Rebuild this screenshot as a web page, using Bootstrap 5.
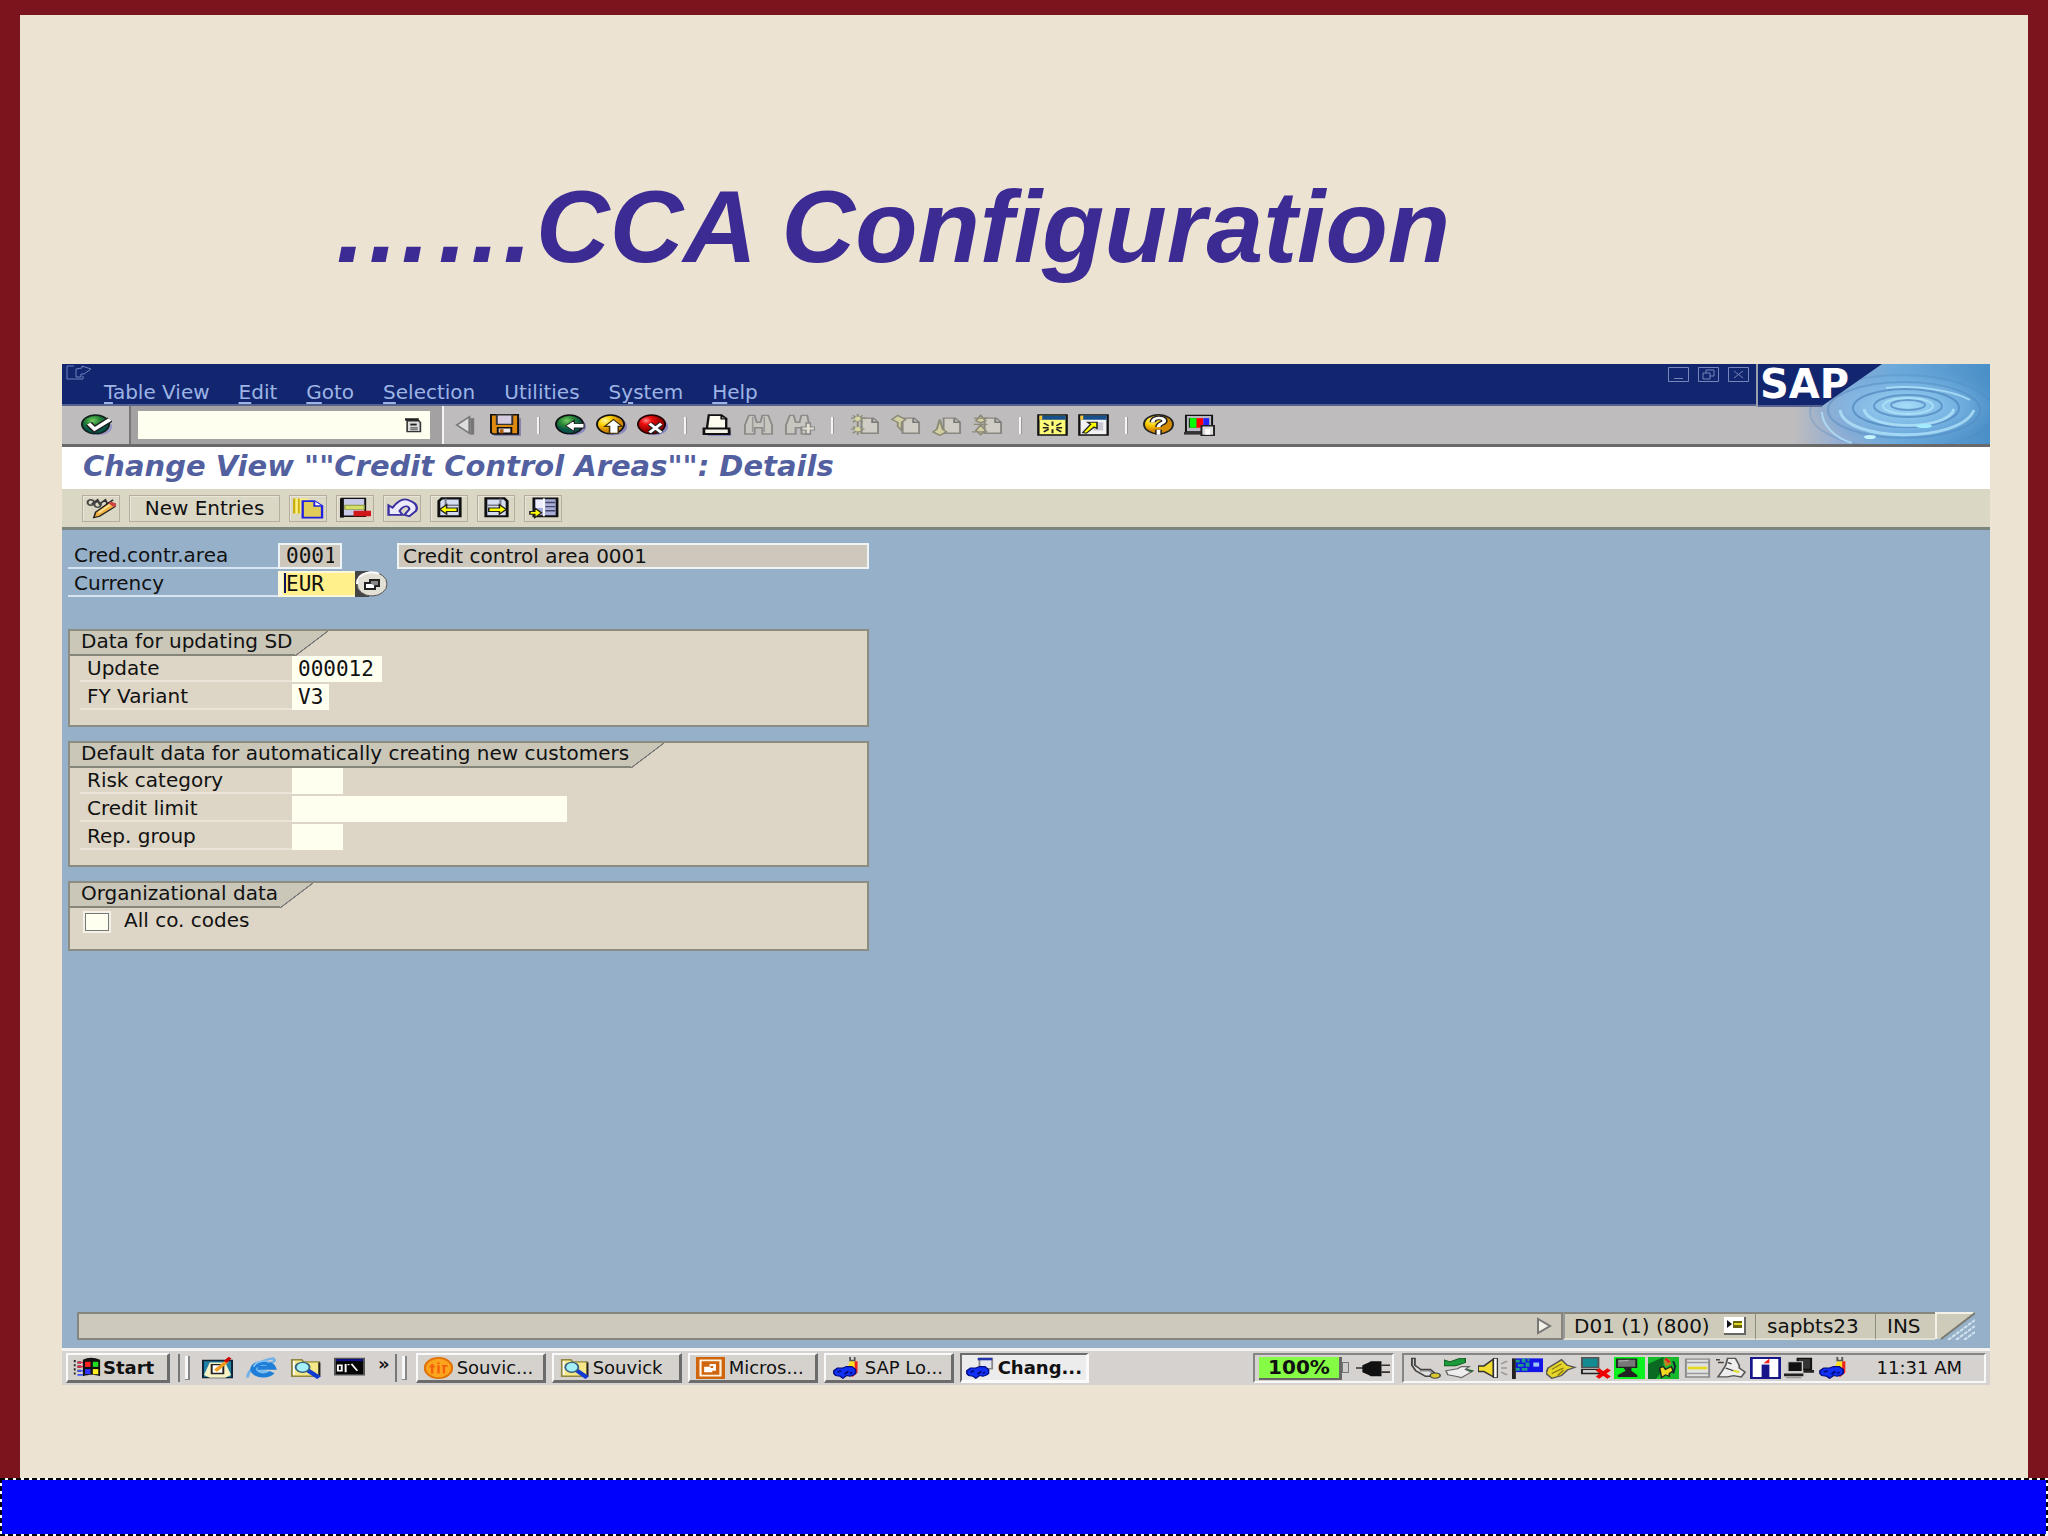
<!DOCTYPE html>
<html lang="en">
<head>
<meta charset="utf-8">
<meta name="viewport" content="width=device-width, initial-scale=1">
<title>CCA Configuration</title>
<link href="https://cdn.jsdelivr.net/npm/bootstrap@5.3.0/dist/css/bootstrap.min.css" rel="stylesheet">
<style>
body{font-family:"DejaVu Sans",sans-serif;font-size:20px;line-height:24px;color:#111;background:#ede3d3}
.slide{min-height:100vh}
.slide-body{border:solid #7b141c;border-width:15px 20px 0}
.slide-head{height:349px;padding:152px 0 0 312px}
.slide-head h1{font:italic bold 102px/120px "Liberation Sans",Arial,sans-serif;color:#3b2b92;white-space:nowrap}
.sap-win{margin:0 38px 93px 42px}
.ico{width:31px;height:22px;display:block;flex:none}
button{font:inherit;color:inherit;padding:0;border:0;background:none}
.menu-row{height:42px;background:#122670;border-bottom:2px solid #56628f}
.menu-row nav{padding-left:12px;gap:29px}
.menu-row a{color:#9db4e4;text-decoration:none}
.menu-row u{text-underline-offset:3px}
.win-mark{width:30px;height:20px;margin-top:-1px}
.win-btns{gap:9px;padding:3px 7px 0 0}
.win-btns svg{width:21px;height:15px;display:block}
.tool-row{height:41px;background:#bebcbd;border-bottom:3px solid #696969}
.ok-cell{width:67px;padding-left:19px}
.cmd-cell{width:315px;background:#a3a1a2;border-left:2px solid #777;border-right:2px solid #f5f5f5;padding:5px 12px 5px 7px}
.cmd-box{background:#fffff0;height:28px}
.cmd-box input{border:0;background:none;min-width:0;outline:0}
.tb{width:41px;display:flex;justify-content:center}
.tsep{width:24px;display:flex;justify-content:center}
.tsep::before{content:"";width:3px;height:17px;background:#f4f4f4;border-right:1px solid #999}
.sap-art{width:234px;height:83px;flex:none;display:block}
.view-title{height:42px;background:#fff;padding-left:21px;font:italic bold 29px/38px "DejaVu Sans",sans-serif;color:#5360a0;margin:0;white-space:nowrap}
.app-row{height:41px;background:#dbd7c5;border-bottom:3px solid #7b8580;padding:0 20px;gap:9px}
.app-row button{height:27px;min-width:38px;border:1px solid #b5ad9e;box-shadow:inset 1px 1px #eae5d8;display:flex;align-items:center;justify-content:center}
.app-row .wide-btn{width:151px}
.work{background:#95b0c8;padding:13px 6px 8px}
.frow{height:28px;display:flex;align-items:flex-start}
.frow label{height:26px;width:210px;padding-left:6px;border-bottom:2px solid #d8e6f2;white-space:nowrap}
.frow input[type=text]{height:26px;border:0;border-radius:0;background:#fffff0;padding:0 6px;font:21px/24px "DejaVu Sans Mono",monospace;color:#111;outline:0}
.frow input.ro{background:#cdc8bb;border:2px solid #eef3f6}
.frow input.txt{font:20px/22px "DejaVu Sans",sans-serif;padding:0 4px;width:472px;margin-left:55px}
.frow input.w4{width:64px}
.frow input.cur{width:77px;background:#fff08c;border:solid #fff8d8;border-width:2px 0 2px 5px;padding-left:3px}
.w-upd{width:90px}.w-fy{width:37px}.w-sm{width:51px}.w-lim{width:275px}
.caret-cell{position:relative}
.caret-cell::before{content:"";position:absolute;left:6px;top:2px;width:2px;height:20px;background:#101060}
.f4{width:33px;height:26px}
.grps{max-width:801px;margin-top:30px;display:flex;flex-direction:column;gap:14px}
.grp{border:2px solid #8c8c80;background:#ddd6c6;padding-bottom:13px;margin:0}
.grp legend{float:left;width:auto;margin:0;display:flex;height:25px;font-size:20px;line-height:20px}
.grp legend span{background:#cac7b9;border-bottom:2px solid #85857a;padding:0 2px 0 11px;white-space:nowrap}
.grp legend::after{content:"";width:33px;background:linear-gradient(to bottom right,#cac7b9 48%,#777 49%,#777 51%,transparent 52%)}
.grp-in{clear:both;padding-left:10px}
.grp .frow label{width:212px;padding-left:7px;border-color:#ece3d8}
.frow input[type=checkbox]{appearance:none;width:26px;height:20px;margin:4px 0 0 4px;background:#fffff0;border:2px solid #777;outline:2px solid #f4f1e6;outline-offset:-1px}
.grp .frow label.chk{border:0;padding-left:14px}
.status{height:28px;margin:0 9px;line-height:24px}
.st-msg{background:#cec9bd;border:2px solid #86867e}
.st-cell{background:#cfcbbb;border-top:2px solid #86867e;border-bottom:2px solid #dfe0d0;white-space:nowrap}
.st-cell + .st-cell{border-left:1px solid #8d8d80}
.st-a{width:192px;padding-left:9px;gap:14px;border-left:2px solid #999}
.st-b{width:120px;padding-left:11px}.st-c{width:60px;padding-left:11px}
.st-end{width:40px;height:28px;display:block}
.taskbar{height:37px;background:#d6d2cf;border-top:3px solid #f3f3f3;padding:2px 4px;font-size:18px;line-height:24px}
.task{height:30px;width:130px;display:flex;align-items:center;gap:4px;padding:0 6px;background:#d5d1cd;border:solid;border-width:2px 3px 3px 2px;border-color:#fafafa #6c6c6c #6c6c6c #fafafa;white-space:nowrap;overflow:hidden}
.task .ico{width:29px}
.start{width:104px;padding:0 3px 0 4px;font-weight:bold;gap:2px}
.task.active{background:#ececec;border-color:#6c6c6c #fafafa #fafafa #6c6c6c;font-weight:bold;width:129px;padding:0 3px}
.grip{width:14px;height:28px;border-left:2px solid #777;position:relative;margin:0 3px 0 8px}
.grip::before{content:"";position:absolute;left:5px;top:2px;width:5px;height:24px;background:#f8f8f8;border-right:2px solid #888;border-bottom:1px solid #888}
.quick{gap:13px;padding:0 5px 0 7px}
.tasks{gap:6px;margin-left:4px}
.inset-box{height:30px;border:2px solid;border-color:#858585 #f8f8f8 #f8f8f8 #858585}
.batt{width:141px;padding-left:4px;gap:14px}
.batt b{width:83px;height:23px;background:#86fb45;border:solid #666;border-width:0 3px 2px 0;font-size:20px;line-height:21px;text-align:center;position:relative}
.batt b::after{content:"";position:absolute;left:83px;top:5px;width:7px;height:11px;background:#ccc;border:1px solid #777}
.tray{padding:0 22px 0 6px;gap:3px;width:584px}
.foot{height:58px;background:#0000fd;
 background-image:repeating-linear-gradient(90deg,#000 0 5px,#fff 5px 8px),repeating-linear-gradient(90deg,#001 0 5px,#fff 5px 8px),repeating-linear-gradient(#001 0 5px,#fff 5px 8px),repeating-linear-gradient(#001 0 5px,#fff 5px 8px);
 background-size:100% 2px,100% 2px,2px 100%,2px 100%;background-position:0 0,0 100%,0 0,100% 0;background-repeat:no-repeat}
</style>
<script src="https://cdn.jsdelivr.net/npm/bootstrap@5.3.0/dist/js/bootstrap.bundle.min.js"></script>
</head>
<body>
<svg width="0" height="0" class="position-absolute" aria-hidden="true"><defs>
<radialGradient id="gGreen" cx=".4" cy=".3"><stop offset="0" stop-color="#7c6"/><stop offset=".5" stop-color="#2b8a36"/><stop offset="1" stop-color="#075548"/></radialGradient>
<radialGradient id="gYel" cx=".3" cy=".3"><stop offset="0" stop-color="#fff7a0"/><stop offset=".5" stop-color="#fcd000"/><stop offset="1" stop-color="#d48a00"/></radialGradient>
<radialGradient id="gRed" cx=".3" cy=".3"><stop offset="0" stop-color="#ff8a8a"/><stop offset=".4" stop-color="#f01010"/><stop offset="1" stop-color="#a00000"/></radialGradient>
<symbol id="ok" viewBox="0 0 16 16" preserveAspectRatio="none"><ellipse cx="9" cy="9" rx="7" ry="6.5" fill="#9996c4"/><ellipse cx="7.5" cy="7.5" rx="7" ry="6.8" fill="url(#gGreen)" stroke="#12201a"/><path d="M4 7l3 4 8-7" fill="none" stroke="#222" stroke-width="4"/><path d="M4 7l3 4 8-7" fill="none" stroke="#fff" stroke-width="2.2"/></symbol>
<symbol id="drop" viewBox="0 0 16 16" preserveAspectRatio="none"><path d="M2 3h11l1.500 2v9.500H2z" fill="#ddd" stroke="#333" stroke-width="1.500"/><path d="M0 1.500h13" stroke="#222" stroke-width="2.500"/><path d="M5 6h6v2H5z" fill="#222"/><path d="M5 10.500h7M5 12.500h7" stroke="#555" stroke-width="1.200"/></symbol>
<symbol id="tri" viewBox="0 0 16 16" preserveAspectRatio="none"><path d="M11 3v12L13 15V3z" fill="#777"/><path d="M10.500 2v12L4 8z" fill="#ddd" stroke="#777"/></symbol>
<symbol id="save" viewBox="0 0 16 16" preserveAspectRatio="none"><path d="M3 3h13v13H2z" fill="#8885a8"/><path d="M.5.5h14v14h-13l-1-1z" fill="#e08a10" stroke="#111"/><path d="M3.500.5h8v7h-8z" fill="#d6cbe0" stroke="#333"/><path d="M4 10h7v4H4z" fill="#f2e8ee" stroke="#111"/><path d="M5 11h2v3H5z" fill="#b06010"/></symbol>
<symbol id="back" viewBox="0 0 16 16" preserveAspectRatio="none"><ellipse cx="9" cy="9" rx="7" ry="6.500" fill="#8a88c0"/><ellipse cx="7.500" cy="7.500" rx="7" ry="6.800" fill="url(#gGreen)" stroke="#111"/><path d="M5.500 8.500L10 4.500v2.500h5v3.200h-5v2.500z" fill="#fff" stroke="#222" stroke-width=".6"/></symbol>
<symbol id="exit" viewBox="0 0 16 16" preserveAspectRatio="none"><ellipse cx="9" cy="9" rx="7" ry="6.500" fill="#8a88c0"/><ellipse cx="7.500" cy="7.500" rx="7" ry="6.800" fill="url(#gYel)" stroke="#111"/><path d="M9 4l4.500 5h-2v5h-4.500V9h-2.500z" fill="#fff" stroke="#443300" stroke-width=".8"/></symbol>
<symbol id="cancel" viewBox="0 0 16 16" preserveAspectRatio="none"><ellipse cx="9" cy="9" rx="7" ry="6.500" fill="#8a88c0"/><ellipse cx="7.500" cy="7.500" rx="7" ry="6.800" fill="url(#gRed)" stroke="#200"/><path d="M6.500 7l6 6.500M12.500 7l-6 6.500" stroke="#222" stroke-width="3.200"/><path d="M6.500 7l6 6.500M12.500 7l-6 6.500" stroke="#fff" stroke-width="1.700"/></symbol>
<symbol id="print" viewBox="0 0 16 16" preserveAspectRatio="none"><path d="M3 12h12v4H3z" fill="#8a88c0"/><path d="M3.500.8h6.500l2.500 2.500v7.500h-10z" fill="#fffdf0" stroke="#111" stroke-width="1.200"/><path d="M10 1v2.500h3" fill="none" stroke="#111"/><path d="M1 10.500h13v4H1z" fill="#f4f4e8" stroke="#111" stroke-width="1.400"/></symbol>
<symbol id="find" viewBox="0 0 16 16" preserveAspectRatio="none"><path d="M3 1h3l1 5h2l1-5h3l2 7v6.500h-5V10H6v4.500H1V8z" fill="#c9c6c0" stroke="#8d8b88"/><path d="M5 2v11M11 2v11" stroke="#999" stroke-width=".8"/></symbol>
<symbol id="findn" viewBox="0 0 16 16" preserveAspectRatio="none"><path d="M3 1h2l1 5h2l1-5h3l1 7v6.500H9V10H6v4.500H1V8z" fill="#c9c6c0" stroke="#8d8b88"/><path d="M12.500 6v9M8.500 10.500h8" stroke="#888" stroke-width="3"/><path d="M12.500 7v7M9.500 10.500h6" stroke="#e3e0d2" stroke-width="1.500"/></symbol>
<symbol id="pg" viewBox="0 0 16 16" preserveAspectRatio="none"><path d="M6.500 3h6l2.500 3v8H6.500z" fill="#d0cdc4" stroke="#8a8882"/><path d="M12 3v3h3" fill="none" stroke="#777"/></symbol>
<symbol id="p1" viewBox="0 0 16 16" preserveAspectRatio="none"><use href="#pg"/><path d="M4.500 0v15M1 3h8M1 11h7M2 1l5 5M7 1L2 6M2 9l5 5M7 9l-5 5" stroke="#8d8b78" stroke-width="1"/><circle cx="4.500" cy="3.500" r="1.500" fill="#d8d6a0"/><circle cx="4.500" cy="11" r="1.500" fill="#d8d6a0"/></symbol>
<symbol id="p2" viewBox="0 0 16 16" preserveAspectRatio="none"><use href="#pg"/><path d="M1 4l3-3 4 3-2 2v6L4 9V6z" fill="#d2d0a0" stroke="#8d8b78"/></symbol>
<symbol id="p3" viewBox="0 0 16 16" preserveAspectRatio="none"><use href="#pg"/><path d="M4.500 4l1.500 7 2 2-3.500 2.500L1 13l2-2z" fill="#d2d0a0" stroke="#8d8b78"/></symbol>
<symbol id="p4" viewBox="0 0 16 16" preserveAspectRatio="none"><use href="#pg"/><path d="M4.500 1L7 5 4.500 6.500 2 5zM4.500 8L7 12l-2.500 3L2 12zM1 3h7M1 7.500h7M0 13h8" fill="#d2d0a0" stroke="#8d8b78"/></symbol>
<symbol id="sess" viewBox="0 0 16 16" preserveAspectRatio="none"><path d="M.7.7h14.600v14.600H.7z" fill="#fdfb78" stroke="#111" stroke-width="1.200"/><path d="M1.200 1.200h13.600v3H1.200z" fill="#18508c"/><path d="M1.200 1.200h1.500v3H1.200z" fill="#fc3"/><path d="M8 5.500v3M8 11v3M3.500 6.500l2.500 2M3 10h3M3.500 13l2.500-2M12.500 6.500l-2.500 2M13 10h-3M12.500 13L10 11" fill="none" stroke="#222"/></symbol>
<symbol id="short" viewBox="0 0 16 16" preserveAspectRatio="none"><path d="M.7.7h14.600v14.600H.7z" fill="#f3f3f6" stroke="#111" stroke-width="1.200"/><path d="M1.200 1.200h13.600v3H1.200z" fill="#18508c"/><path d="M1.200 1.200h1.500v3H1.200z" fill="#fc3"/><path d="M9 6h4v6H8z" fill="#c9c8d4"/><path d="M2.500 13.500l4-6-1.500-1.500h4.800v4.500L8.300 9.500l-4 4.500z" fill="#ff0" stroke="#222" stroke-width=".8"/></symbol>
<symbol id="help" viewBox="0 0 16 16" preserveAspectRatio="none"><ellipse cx="8" cy="7.500" rx="7.500" ry="7" fill="url(#gYel)" stroke="#222"/><path d="M5 6c0-4 6-4 6-1 0 2-3 1.500-3 4.500M8 11.500v3.500" fill="none" stroke="#222" stroke-width="3.500"/><path d="M5 6c0-4 6-4 6-1 0 2-3 1.500-3 4.500M8 11.500v3.500" fill="none" stroke="#fff" stroke-width="1.900"/></symbol>
<symbol id="layout" viewBox="0 0 16 16" preserveAspectRatio="none"><path d="M1 1h13.500v12H1z" fill="#b8b8c0" stroke="#111"/><path d="M0 14h9" stroke="#333" stroke-width="2"/><path d="M2.500 3h4v7h-4z" fill="#0e2010"/><path d="M3 3h3.500v7H3z" fill="#0f0"/><path d="M6.500 3h3.500v7H6.500z" fill="#f00"/><path d="M10 3h3v5h-3z" fill="#22f"/><path d="M9 8.500h6.500v7H9z" fill="#ddd" stroke="#222"/><path d="M11 11h2.500v4H11z" fill="#fff"/></symbol>
<symbol id="edit" viewBox="0 0 16 16" preserveAspectRatio="none"><path d="M3 5l3-3 1 3 3-3 1 3 3-3" fill="none" stroke="#333" stroke-width="1"/><ellipse cx="2.500" cy="4" rx="1.700" ry="2" fill="none" stroke="#444"/><ellipse cx="6" cy="5.500" rx="1.700" ry="2" fill="none" stroke="#444"/><path d="M4 15l1-4 7-7 3 1v2l-8 7z" fill="#f4b040" stroke="#222" stroke-width=".8"/><path d="M6.500 11.500l6-6" stroke="#fde9a0"/><path d="M12.500 3.500l3 1v2l-1 1-3-3z" fill="#c44"/></symbol>
<symbol id="copy" viewBox="0 0 16 16" preserveAspectRatio="none"><path d="M0 1h8v11H0z" fill="#fbf080"/><path d="M0 1h1.200v11H0zM2.500 1h1v11h-1z" fill="#c9b010"/><path d="M5 3h6l4 3.500V15H5z" fill="#e0cc58" stroke="#2020e0" stroke-width="1.200"/><path d="M11 3v3.500h4" fill="#fff" stroke="#2020e0"/></symbol>
<symbol id="del" viewBox="0 0 16 16" preserveAspectRatio="none"><path d="M1 1h12v13H1z" fill="#c9c9ea" stroke="#111"/><path d="M1 1v14" stroke="#111" stroke-width="2"/><path d="M2.500 6h10v3h-10z" fill="#d4df6a" stroke="#8a9a40" stroke-width=".6"/><path d="M7 10h9v4H7z" fill="#d01818"/></symbol>
<symbol id="undo" viewBox="0 0 16 16" preserveAspectRatio="none"><path d="M.8 13V6l2 1.800C5.500 3 8 1 10.500 2c4.500 2 5.500 5 4.500 8l-3.500 4-2.500-1 2.500-4c0-3-3-3.500-5 1.200L8 13z" fill="#eceafa" stroke="#3a2fa0" stroke-width="1.200"/></symbol>
<symbol id="prev" viewBox="0 0 16 16" preserveAspectRatio="none"><path d="M4 1h9.500v13H2.500V3z" fill="#d4dcf2" stroke="#111" stroke-width="1.500"/><path d="M6 1v5h7" fill="none" stroke="#778"/><path d="M3 9l3.500-3.500V8H12v2.500H6.500v2z" fill="#ff0" stroke="#222" stroke-width=".8"/></symbol>
<symbol id="next" viewBox="0 0 16 16" preserveAspectRatio="none"><path d="M2.500 1H12l1.500 2v11h-11z" fill="#d4dcf2" stroke="#111" stroke-width="1.500"/><path d="M10 1v5H3" fill="none" stroke="#778"/><path d="M13 9L9.500 5.500V8H4v2.500h5.500v2z" fill="#ff0" stroke="#222" stroke-width=".8"/></symbol>
<symbol id="ent" viewBox="0 0 16 16" preserveAspectRatio="none"><path d="M3 1h12v13H3z" fill="#a9aed8" stroke="#111" stroke-width="1.400"/><path d="M4 2h4v6H4z" fill="#eef"/><path d="M9 4h5M9 7h5M9 10h5" stroke="#446"/><path d="M8.200 1v13" stroke="#fff"/><path d="M1 10.500h2.500V8L7 11.500 3.500 15v-2.500H1z" fill="#ff0" stroke="#222" stroke-width=".8"/></symbol>
<symbol id="srch" viewBox="0 0 16 16" preserveAspectRatio="none"><path d="M1 2h5l1 1.500h8V14H1z" fill="#f6e888" stroke="#8f8640"/><path d="M15.200 4v10" stroke="#222"/><path d="M2 3v10" stroke="#fff"/><path d="M9 9.500l6 5.500" stroke="#113bd0" stroke-width="2.800"/><circle cx="6.500" cy="7.500" r="3.600" fill="#a6f0fa" stroke="#35627c"/></symbol>
<symbol id="desk" viewBox="0 0 16 16" preserveAspectRatio="none"><path d="M.5 2.500h15V15H.5z" fill="#1f7fa6" stroke="#123"/><path d="M1 13l3-9h8l3 9-3 2H4z" fill="#f6f2c4"/><path d="M5 5.500h6V12H5z" fill="#fff" stroke="#222"/><path d="M7 10l6-7" stroke="#f09a20" stroke-width="2.200"/><path d="M12 3.500l2.500-3" stroke="#c00" stroke-width="2"/></symbol>
<symbol id="ie" viewBox="0 0 16 16" preserveAspectRatio="none"><path d="M1 15C0 11 7 2 14 1c2 2-1 3-1 3" fill="none" stroke="#6fb2ea" stroke-width="1.500"/><path d="M13.500 11a5.200 4.600 0 1 1 .5-3.200H6" fill="#7cbcf0" stroke="#1f7fd8" stroke-width="3"/><path d="M4 7c1-4 6-5 8-3" fill="none" stroke="#86c4f4"/></symbol>
<symbol id="dos" viewBox="0 0 16 16" preserveAspectRatio="none"><path d="M.5 1h15v12H.5z" fill="#050505" stroke="#555"/><path d="M1 1.500h14v1.500H1z" fill="#11118a"/><path d="M2 6h2v4H2zM6 5v6M7.500 5v1M9 5l3 5" fill="none" stroke="#fff"/></symbol>
<symbol id="win" viewBox="0 0 16 16" preserveAspectRatio="none"><path d="M6 2c3-2 6-2 9.500 0v12c-3-1.500-6-1.500-9.500 0z" fill="#111"/><path d="M1 3h1M3 4h2M1 6h1M3 7h2M1 9h1M3 10h2M1 12h1" stroke="#222" stroke-width="1.500"/><path d="M3 4h3M3 7h3" stroke="#e24" stroke-width="1.200"/><path d="M3 10h3M3 13h3" stroke="#45f" stroke-width="1.200"/><path d="M7.200 3.500h3v3.700h-3z" fill="#f22"/><path d="M11.500 3.500h3v3.700h-3z" fill="#2d2"/><path d="M7.200 8.800h3v3.700h-3z" fill="#33f"/><path d="M11.500 8.800h3v3.700h-3z" fill="#fe2"/></symbol>
<symbol id="souv" viewBox="0 0 16 16" preserveAspectRatio="none"><ellipse cx="8" cy="8" rx="7.500" ry="7.300" fill="#fca41c" stroke="#e07408" stroke-width="1.300"/><path d="M4.500 5v7M8 4v1M8 6v6M11 6v6M3 7h3M10 6.500h3" fill="none" stroke="#f4600c" stroke-width="1.300"/></symbol>
<symbol id="ppt" viewBox="0 0 16 16" preserveAspectRatio="none"><path d="M0 0h16v16H0z" fill="#cf660e"/><path d="M2.500 2.500h11v11h-11z" fill="none" stroke="#fff3e0" stroke-width="1.200"/><path d="M4.500 7h3V5H11v5H9v1H4.500z" fill="#fff"/><path d="M8 6.500h1.500V8H8z" fill="#cf660e"/></symbol>
<symbol id="crew" viewBox="0 0 16 16"><path d="M1 10l2-2h3l2-1h3l2 2v3l-1 1-2 1-2-.5L6 15.500 4.500 14 2 13.500 1 12z" fill="#1030f4" stroke="#000a80" stroke-width=".8"/><path d="M3 11l2-1M7 12.500l2-2M10 12l1-1" stroke="#02087a" stroke-width="1.200"/></symbol>
<symbol id="logon" viewBox="0 0 16 16" preserveAspectRatio="none"><path d="M8 9l2-6h4v7l-3 4H8z" fill="#ffdf20"/><path d="M13.300 3v8l-2.500 3" fill="none" stroke="#e22" stroke-width="1.600"/><path d="M10 0v2.500h2.500V0" fill="#ddd" stroke="#555"/><use href="#crew"/></symbol>
<symbol id="chg" viewBox="0 0 16 16" preserveAspectRatio="none"><path d="M8 1h7v7.500H8z" fill="#e6e6f0" stroke="#888"/><path d="M7 1.500h8" stroke="#2233a8" stroke-width="1.800"/><use href="#crew"/></symbol>
<symbol id="plug" viewBox="0 0 16 16" preserveAspectRatio="none"><path d="M0 8h4M12 6h4M12 11h4" stroke="#333" stroke-width="1.200"/><path d="M3 6l3-2 1-1h5v11H7l-1-1-3-2z" fill="#111"/></symbol>
<symbol id="t1" viewBox="0 0 16 16" preserveAspectRatio="none"><path d="M1 1h1.500v5l3 3h5l2.500 3v2H8l-5-4-2-4z" fill="#e2e2e2" stroke="#444"/><path d="M5 10h5l2 2" fill="none" stroke="#888"/><ellipse cx="13" cy="13.500" rx="2.600" ry="1.900" fill="#d8c830" stroke="#444" stroke-width=".8"/></symbol>
<symbol id="t2" viewBox="0 0 16 16" preserveAspectRatio="none"><path d="M0 2l3 1.500L8 1h3v3L6 6.500H0zM12 9l3 1-3 2z" fill="#1b9a3a" stroke="#0a5018" stroke-width=".6"/><path d="M1 10l6-1.500L9 7h4l-2 2 3 2-5 4-3-1-4-1z" fill="#eee" stroke="#666" stroke-width=".8"/></symbol>
<symbol id="t3" viewBox="0 0 16 16" preserveAspectRatio="none"><path d="M0 6.500h3l5-5v13L3 10.500H0z" fill="#f2dc30" stroke="#333"/><path d="M8 1h2v14H8z" fill="#fff" stroke="#333" stroke-width=".7"/><path d="M12 5l3-2M12 8h3M12 11l3 2" stroke="#999"/></symbol>
<symbol id="t4" viewBox="0 0 16 16" preserveAspectRatio="none"><path d="M1 1v15" stroke="#222" stroke-width="2"/><path d="M2 1h14v10H2z" fill="#1414e6"/><path d="M2 2h2v2H2zM5 1h2v3H5zM3 5h3v2H3zM7 4h2v3H7zM2 8h2v2H2zM5 8h3v2H5zM8 1h1v2H8z" fill="#1c9a8a"/><path d="M11 4h3v3h-3z" fill="#9cc4fc"/></symbol>
<symbol id="t5" viewBox="0 0 16 16" preserveAspectRatio="none"><path d="M0 12l1-4 7-6 3 4 4 1.500-4 2-3 4-5 2z" fill="#e6d62a" stroke="#555" stroke-width=".9"/><path d="M3 9l5-4M3 12l6-4M6 13.500l3-4" stroke="#877a10" stroke-width=".8"/></symbol>
<symbol id="t6" viewBox="0 0 16 16" preserveAspectRatio="none"><path d="M1 .5h8.500v7H1z" fill="#128b92" stroke="#555"/><path d="M1 9h9v3H1z" fill="#ccc" stroke="#222"/><path d="M9 9l6 6M15 9l-6 6" stroke="#e00" stroke-width="2.500"/></symbol>
<symbol id="t7" viewBox="0 0 16 16" preserveAspectRatio="none"><path d="M0 0h16v16H0z" fill="#0cf020"/><path d="M1.500 1.500h10v6h-10z" fill="#777" stroke="#222"/><path d="M5 8l1 2-4 3v1.500h10V13l-3-3V8z" fill="#222"/><path d="M2.500 3l5-.5" stroke="#aaa"/></symbol>
<symbol id="t8" viewBox="0 0 16 16" preserveAspectRatio="none"><path d="M0 0h16v16H0z" fill="#16b82c"/><path d="M0 5l8-5v9l-4 7H0z" fill="#0a6a22"/><path d="M8 2l3-1 1 4-3 2z" fill="#b82"/><path d="M9 1l2 3" stroke="#d22" stroke-width="1.500"/><path d="M6 8l2-1 1 2 3-2 1 3-2 2v2l-2-1-2 2z" fill="#f0d820" stroke="#222" stroke-width=".8"/><path d="M13 3l1 4-1 5" fill="none" stroke="#123"/></symbol>
<symbol id="t9" viewBox="0 0 16 16" preserveAspectRatio="none"><path d="M2 1.500h12v13H2z" fill="#e2e2e2" stroke="#8a8a8a"/><path d="M2 4h12M2 12h12" stroke="#999"/><path d="M3 8h10" stroke="#e6da20" stroke-width="2"/></symbol>
<symbol id="t10" viewBox="0 0 16 16" preserveAspectRatio="none"><path d="M5 6l1-5h4l2 5v2l3 3-2 3.500-4-1-3 1H1l2-4z" fill="#eee" stroke="#555" stroke-width=".9"/><path d="M0 2h2M1 4h3M6 4l2 1M5 8l4 2" stroke="#444"/><path d="M9 10l3 1" stroke="#dd2" stroke-width="1.500"/></symbol>
<symbol id="t11" viewBox="0 0 16 16" preserveAspectRatio="none"><path d="M.7.7h14.600v14.600H.7z" fill="#fff" stroke="#16168a" stroke-width="1.400"/><path d="M6 5.500h4V15H6z" fill="#16168a"/><path d="M7 4.500L10 1v3.500z" fill="#e22"/></symbol>
<symbol id="t12" viewBox="0 0 16 16" preserveAspectRatio="none"><path d="M7 1h7v8H7z" fill="#333" stroke="#111"/><path d="M2 3.500h7.500v7H2z" fill="#111" stroke="#ccc" stroke-width=".7"/><path d="M0 13h10M10 10.500h5.500" stroke="#222" stroke-width="2"/><path d="M1 15h8" stroke="#999"/></symbol>
</defs></svg>

<div class="slide d-flex flex-column">
 <div class="slide-body flex-grow-1 d-flex flex-column">
  <header class="slide-head"><h1 class="m-0">……CCA Configuration</h1></header>

  <section class="sap-win flex-grow-1 d-flex flex-column">
   <div class="d-flex">
    <div class="flex-grow-1">
     <div class="menu-row d-flex">
      <svg class="win-mark" viewBox="0 0 30 20"><path d="M5 3v13h16v-3M5 3h7M14 6l6-1V3l9 3-7 5h-3v3h-5z" fill="none" stroke="#6f80bc"/></svg>
      <nav class="d-flex align-items-end flex-grow-1">
       <a href="#"><u>T</u>able View</a><a href="#"><u>E</u>dit</a><a href="#"><u>G</u>oto</a><a href="#"><u>S</u>election</a><a href="#">Utilities</a><a href="#">S<u>y</u>stem</a><a href="#"><u>H</u>elp</a>
      </nav>
      <div class="win-btns d-flex align-items-start">
       <button aria-label="Minimize"><svg viewBox="0 0 21 15"><path d="M.5.5h20v14H.5zM6 11.500h9" fill="none" stroke="#7684ba"/></svg></button>
       <button aria-label="Restore"><svg viewBox="0 0 21 15"><path d="M.5.5h20v14H.5zM5 6h7v6H5zM8 6V3h8v6h-4" fill="none" stroke="#7684ba"/></svg></button>
       <button aria-label="Close"><svg viewBox="0 0 21 15"><path d="M.5.5h20v14H.5zM6 4l9 7M15 4l-9 7" fill="none" stroke="#7684ba"/></svg></button>
      </div>
     </div>
     <div class="tool-row d-flex">
      <div class="ok-cell d-flex align-items-center"><button aria-label="Enter"><svg class="ico"><use href="#ok"/></svg></button></div>
      <div class="cmd-cell"><div class="cmd-box d-flex align-items-center"><input type="text" class="flex-grow-1" aria-label="Command field"><button aria-label="Command list" class="me-2"><svg width="17" height="15" class="d-block"><use href="#drop"/></svg></button></div></div>
      <div class="d-flex align-items-center">
       <button class="tb" aria-label="Hide"><svg class="ico"><use href="#tri"/></svg></button>
       <button class="tb" aria-label="Save"><svg class="ico"><use href="#save"/></svg></button><span class="tsep"></span>
       <button class="tb" aria-label="Back"><svg class="ico"><use href="#back"/></svg></button>
       <button class="tb" aria-label="Exit"><svg class="ico"><use href="#exit"/></svg></button>
       <button class="tb" aria-label="Cancel"><svg class="ico"><use href="#cancel"/></svg></button><span class="tsep"></span>
       <button class="tb" aria-label="Print"><svg class="ico"><use href="#print"/></svg></button>
       <button class="tb" aria-label="Find"><svg class="ico"><use href="#find"/></svg></button>
       <button class="tb" aria-label="Find next"><svg class="ico"><use href="#findn"/></svg></button><span class="tsep"></span>
       <button class="tb" aria-label="First page"><svg class="ico"><use href="#p1"/></svg></button>
       <button class="tb" aria-label="Previous page"><svg class="ico"><use href="#p2"/></svg></button>
       <button class="tb" aria-label="Next page"><svg class="ico"><use href="#p3"/></svg></button>
       <button class="tb" aria-label="Last page"><svg class="ico"><use href="#p4"/></svg></button><span class="tsep"></span>
       <button class="tb" aria-label="New session"><svg class="ico"><use href="#sess"/></svg></button>
       <button class="tb" aria-label="Shortcut"><svg class="ico"><use href="#short"/></svg></button><span class="tsep"></span>
       <button class="tb" aria-label="Help"><svg class="ico"><use href="#help"/></svg></button>
       <button class="tb" aria-label="Layout"><svg class="ico"><use href="#layout"/></svg></button>
      </div>
     </div>
    </div>
    <svg class="sap-art" viewBox="0 0 234 83" role="img" aria-label="SAP">
     <defs>
      <linearGradient id="wg" x1="0" x2="1"><stop offset="0" stop-color="#bebcbd"/><stop offset=".16" stop-color="#bebcbd"/><stop offset=".36" stop-color="#93aed4"/><stop offset=".6" stop-color="#6caadb"/><stop offset="1" stop-color="#4a8fc8"/></linearGradient>
      <radialGradient id="wr" gradientUnits="userSpaceOnUse" cx="0" cy="0" r="1" gradientTransform="translate(150 42) scale(100 40)"><stop offset="0" stop-color="#a5dcf8"/><stop offset=".6" stop-color="#7db8e6" stop-opacity=".6"/><stop offset="1" stop-color="#5a9ccf" stop-opacity="0"/></radialGradient>
     </defs>
     <path d="M0 0h234v83H0z" fill="url(#wg)"/><path d="M40 0h194v83H40z" fill="url(#wr)"/>
     <g fill="none"><g stroke="#4f86bd" opacity=".7" stroke-width="2"><ellipse cx="152" cy="41" rx="17" ry="5"/><ellipse cx="152" cy="42" rx="34" ry="11"/><ellipse cx="150" cy="44" rx="53" ry="19"/><ellipse cx="148" cy="46" rx="76" ry="28" opacity=".6"/><ellipse cx="146" cy="48" rx="92" ry="37" opacity=".4"/></g>
     <g stroke="#b5e6fb" opacity=".75" stroke-width="2"><ellipse cx="152" cy="42" rx="25" ry="8"/><path d="M108 45c3 22 84 22 90 0" stroke-width="3"/><path d="M84 46c4 32 120 34 134 0" stroke-width="3"/><path d="M66 48c0 12 12 26 30 31"/><path d="M130 24c30-3 66 2 84 12"/></g></g>
     <ellipse cx="114" cy="73" rx="6" ry="2" fill="#c5f4ff"/><ellipse cx="168" cy="62" rx="8" ry="2" fill="#a5ecff"/>
     <path d="M0 0h126L66 42H0z" fill="#122670"/><path d="M0 42h66" stroke="#56628f" stroke-width="2"/>
     <path d="M1 0v43" stroke="#9aa0a8" stroke-width="2"/><path d="M0 81.500h234" stroke="#696969" stroke-width="3"/>
     <text x="4" y="34" font-family="DejaVu Sans" font-weight="bold" font-size="40" fill="#fff">SAP</text>
    </svg>
   </div>

   <h2 class="view-title">Change View ""Credit Control Areas"": Details</h2>

   <div class="app-row d-flex align-items-center">
    <button aria-label="Display/Change"><svg class="ico"><use href="#edit"/></svg></button>
    <button class="wide-btn">New Entries</button>
    <button aria-label="Copy as"><svg class="ico"><use href="#copy"/></svg></button>
    <button aria-label="Delete"><svg class="ico"><use href="#del"/></svg></button>
    <button aria-label="Undo"><svg class="ico"><use href="#undo"/></svg></button>
    <button aria-label="Previous entry"><svg class="ico"><use href="#prev"/></svg></button>
    <button aria-label="Next entry"><svg class="ico"><use href="#next"/></svg></button>
    <button aria-label="Other entry"><svg class="ico"><use href="#ent"/></svg></button>
   </div>

   <main class="work flex-grow-1 d-flex flex-column">
    <div class="frow"><label for="cca">Cred.contr.area</label><input id="cca" class="ro w4" type="text" value="0001" readonly><input class="ro txt" type="text" value="Credit control area 0001" aria-label="Description" readonly></div>
    <div class="frow"><label for="cur">Currency</label><div class="caret-cell d-flex"><input id="cur" class="cur" type="text" value="EUR"></div>
     <button aria-label="Possible entries"><svg class="f4 d-block" viewBox="0 0 33 26"><path d="M0 0h14v26H0z" fill="#444"/><ellipse cx="17" cy="13" rx="15" ry="12" fill="#e2dfd4" stroke="#555"/><path d="M2 13C2 0 20 0 24 3" fill="none" stroke="#fff" stroke-width="2"/><path d="M10 12h10v6H10z" fill="#fff" stroke="#222" stroke-width="2"/><path d="M15 12V9h9v6h-4" fill="#888" stroke="#222" stroke-width="2"/></svg></button></div>

    <div class="grps">
     <fieldset class="grp"><legend><span>Data for updating SD</span></legend>
      <div class="grp-in">
       <div class="frow"><label for="upd">Update</label><input id="upd" class="w-upd" type="text" value="000012"></div>
       <div class="frow"><label for="fy">FY Variant</label><input id="fy" class="w-fy" type="text" value="V3"></div>
      </div></fieldset>
     <fieldset class="grp"><legend><span>Default data for automatically creating new customers</span></legend>
      <div class="grp-in">
       <div class="frow"><label for="risk">Risk category</label><input id="risk" class="w-sm" type="text"></div>
       <div class="frow"><label for="lim">Credit limit</label><input id="lim" class="w-lim" type="text"></div>
       <div class="frow"><label for="rep">Rep. group</label><input id="rep" class="w-sm" type="text"></div>
      </div></fieldset>
     <fieldset class="grp"><legend><span>Organizational data</span></legend>
      <div class="grp-in">
       <div class="frow"><input id="all" type="checkbox"><label class="chk" for="all">All co. codes</label></div>
      </div></fieldset>
    </div>

    <div class="status d-flex mt-auto">
     <div class="st-msg flex-grow-1 d-flex justify-content-end align-items-center pe-2"><svg width="18" height="18" viewBox="0 0 18 18"><path d="M3 2v14l12-7z" fill="#f4f1e8" stroke="#777" stroke-width="2"/></svg></div>
     <div class="st-cell st-a d-flex align-items-center"><span>D01 (1) (800)</span><svg width="22" height="18" viewBox="0 0 22 18"><path d="M0 0h22v18H0z" fill="#666"/><path d="M0 0h20v16H0z" fill="#fff"/><path d="M3 3v8l5-4z" fill="#111"/><path d="M9 4h9v7H9z" fill="#6a6410"/><path d="M10 6h8v2h-8z" fill="#e0d820"/></svg></div>
     <div class="st-cell st-b">sapbts23</div><div class="st-cell st-c">INS</div>
     <svg class="st-end" viewBox="0 0 40 28"><path d="M0 0h40L6 27H0z" fill="#cfcbbb"/><path d="M0 1h38M1 0v27" stroke="#f4f2e8" stroke-width="2"/><path d="M40 1L6 27" stroke="#7a7a70" stroke-width="2"/><path d="M13 28L40 8M21 28L40 14M29 28L40 20" stroke="#d4e4ee" stroke-width="2" stroke-dasharray="4 1"/></svg>
    </div>
   </main>

   <footer class="taskbar d-flex align-items-center">
    <button class="task start"><svg class="ico"><use href="#win"/></svg>Start</button>
    <span class="grip"></span>
    <div class="quick d-flex align-items-center">
     <button aria-label="Show desktop"><svg class="ico"><use href="#desk"/></svg></button>
     <button aria-label="Browser"><svg class="ico"><use href="#ie"/></svg></button>
     <button aria-label="Explorer"><svg class="ico"><use href="#srch"/></svg></button>
     <button aria-label="Command prompt"><svg class="ico"><use href="#dos"/></svg></button>
     <button class="fw-bold pb-2" aria-label="More">»</button>
    </div>
    <span class="grip ms-0"></span>
    <div class="tasks d-flex">
     <button class="task"><svg class="ico"><use href="#souv"/></svg>Souvic...</button>
     <button class="task"><svg class="ico"><use href="#srch"/></svg>Souvick</button>
     <button class="task"><svg class="ico"><use href="#ppt"/></svg>Micros...</button>
     <button class="task"><svg class="ico"><use href="#logon"/></svg>SAP Lo...</button>
     <button class="task active"><svg class="ico"><use href="#chg"/></svg>Chang...</button>
    </div>
    <div class="inset-box batt d-flex align-items-center ms-auto"><b>100%</b><svg width="34" height="22"><use href="#plug"/></svg></div>
    <div class="inset-box tray d-flex align-items-center ms-2">
     <svg class="ico"><use href="#t1"/></svg><svg class="ico"><use href="#t2"/></svg><svg class="ico"><use href="#t3"/></svg><svg class="ico"><use href="#t4"/></svg><svg class="ico"><use href="#t5"/></svg><svg class="ico"><use href="#t6"/></svg><svg class="ico"><use href="#t7"/></svg><svg class="ico"><use href="#t8"/></svg><svg class="ico"><use href="#t9"/></svg><svg class="ico"><use href="#t10"/></svg><svg class="ico"><use href="#t11"/></svg><svg class="ico"><use href="#t12"/></svg><svg class="ico"><use href="#logon"/></svg>
     <time class="ms-auto text-nowrap">11:31 AM</time>
    </div>
   </footer>
  </section>
 </div>
 <div class="foot"></div>
</div>
</body>
</html>
